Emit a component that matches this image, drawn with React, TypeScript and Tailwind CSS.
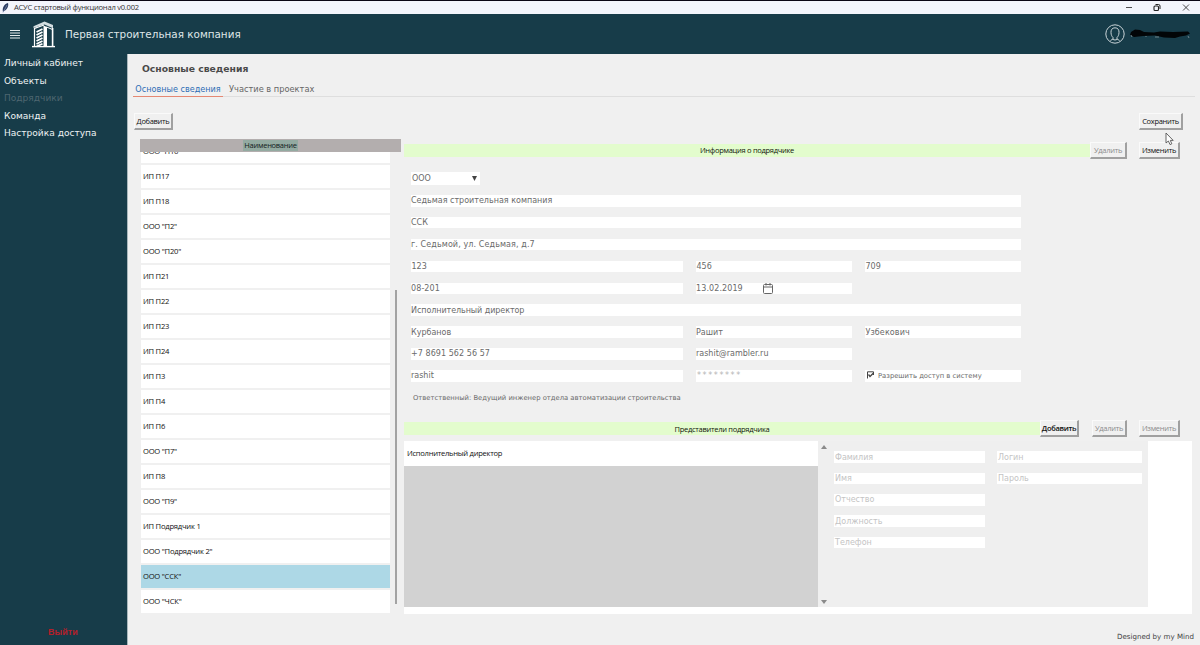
import { ReactNode } from "react";
import { clsx } from "clsx";

const menu = [
  { label: "Личный кабинет" },
  { label: "Объекты" },
  { label: "Подрядчики", disabled: true },
  { label: "Команда" },
  { label: "Настройка доступа" },
];

const contractors = [
  'ООО "П16"',
  "ИП П17",
  "ИП П18",
  'ООО "П2"',
  'ООО "П20"',
  "ИП П21",
  "ИП П22",
  "ИП П23",
  "ИП П24",
  "ИП П3",
  "ИП П4",
  "ИП П6",
  'ООО "П7"',
  "ИП П8",
  'ООО "П9"',
  "ИП Подрядчик 1",
  'ООО "Подрядчик 2"',
  'ООО "ССК"',
  'ООО "ЧСК"',
];

function Button({
  children,
  disabled,
  className,
}: {
  children: ReactNode;
  disabled?: boolean;
  className?: string;
}) {
  return (
    <button
      disabled={disabled}
      className={clsx(
        "flex h-[17px] shrink-0 items-center justify-center whitespace-nowrap border border-b-2 border-r-2 border-t-[#fafafa] border-l-[#fafafa] border-b-[#a0a0a0] border-r-[#a0a0a0] bg-[#f0f0f0] pt-px font-['Open_Sans',sans-serif] text-[7.5px] leading-none tracking-[-0.3px]",
        disabled ? "text-[#8c8c8c]" : "text-[#111]",
        className
      )}
    >
      {children}
    </button>
  );
}

function Banner({ children }: { children: ReactNode }) {
  return (
    <div className="flex h-[13px] flex-1 items-center justify-center bg-[#e3fccd] pt-px font-['Open_Sans',sans-serif] text-[7.5px] font-medium leading-none tracking-[-0.28px] text-[#10160a]">
      {children}
    </div>
  );
}

function Field({
  children,
  className,
}: {
  children?: ReactNode;
  className?: string;
}) {
  return (
    <div
      className={clsx(
        "flex h-[11.5px] shrink-0 items-center whitespace-nowrap bg-white pt-px leading-none",
        className
      )}
    >
      {children}
    </div>
  );
}

function Row({ children }: { children: ReactNode }) {
  return <div className="flex h-[21.9px] items-start gap-[13px]">{children}</div>;
}

export default function App() {
  return (
    <div className="flex h-[645px] w-[1200px] flex-col overflow-hidden bg-[#f0f0f0] font-['DejaVu_Sans',sans-serif] text-[8px]">
      {/* Window title */}
      <div className="flex h-[14px] shrink-0 items-center border-t border-[#0a0614] bg-[#f3f5fc]">
        <svg className="ml-[1px] h-[11px] w-[9px]" viewBox="0 0 9 11">
          <path d="M2 10 C1 6 3 2 7 1 C8 4 6 8 3 9 Z" fill="#2b3b60" />
          <path d="M2 10.5 L6 3" stroke="#8495b8" strokeWidth="0.7" />
        </svg>
        <span className="ml-[4px] whitespace-nowrap font-['Open_Sans',sans-serif] text-[7.6px] leading-none tracking-[-0.25px] text-[#333]">
          АСУС стартовый функционал v0.002
        </span>
        <svg
          className="ml-auto mr-[9px] h-[9px] w-[66px]"
          viewBox="0 0 66 9"
          fill="none"
          stroke="#222"
        >
          <path d="M1 4.5 H7" strokeWidth="0.8" />
          <rect x="29" y="3" width="4.5" height="4.5" rx="1" strokeWidth="1.1" />
          <path d="M30.5 1.5 H33.5 Q35 1.5 35 3 V6" strokeWidth="1" />
          <path d="M58 1.5 L64 7.5 M64 1.5 L58 7.5" strokeWidth="0.8" />
        </svg>
      </div>

      {/* Header */}
      <header className="flex h-[40px] shrink-0 items-center bg-[#173c49] text-[#dfe6e8]">
        <svg
          className="ml-[10px] h-[10px] w-[10px]"
          viewBox="0 0 10 10"
          stroke="#e4eaec"
          strokeWidth="1.2"
        >
          <path d="M0 1.5 H10 M0 4 H10 M0 6.5 H10 M0 9 H10" />
        </svg>
        <svg className="ml-[11px] h-[27px] w-[25px]" viewBox="0 0 25 27" fill="none">
          <path d="M1 25.6 H24" stroke="#fff" strokeWidth="1.4" />
          <path d="M3.5 25 V7.5 L13 4" stroke="#fff" strokeWidth="1.2" />
          <path d="M2.5 5.2 L13.5 0.6 L22 4 V7.3 L13.5 3.4 L2.5 7 Z" fill="#d3dee1" />
          <path
            d="M5.5 11 L11.5 8 M5.5 14 L11.5 11 M5.5 17 L11.5 14 M5.5 20 L11.5 17 M5.5 23 L11.5 20 M5.5 25.5 L11.5 22.8"
            stroke="#fff"
            strokeWidth="1.8"
          />
          <path d="M12.5 4.5 L16 6 V25.5 H12.5 Z M20.8 7 H22.4 V25.5 H20.8 Z" fill="#fff" />
          <path d="M15.5 6 L21.5 8.5" stroke="#fff" strokeWidth="1" />
        </svg>
        <span className="ml-[9px] whitespace-nowrap text-[10.4px] leading-none">
          Первая строительная компания
        </span>
        <svg
          className="ml-auto h-[20px] w-[20px]"
          viewBox="0 0 20 20"
          fill="none"
          stroke="#c9d3d7"
          strokeWidth="1"
        >
          <circle cx="10" cy="10" r="9.2" />
          <path d="M10 3.8 C7 3.8 5.8 6 6 8.7 C6.1 11 7 12.6 8 13.5 V15 L5.5 16.5 M10 3.8 C13 3.8 14.2 6 14 8.7 C13.9 11 13 12.6 12 13.5 V15 L14.5 16.5" />
          <path d="M8 15.5 Q10 16.5 12 15.5" />
        </svg>
        <svg className="ml-[3px] mr-[6px] h-[12px] w-[66px]" viewBox="0 0 66 12">
          <path
            d="M3 4 L7 1.5 L12 2 L16 4 L26 4.5 L32 3.5 L45 4 L60 3.5 L62 5.5 L58 7.5 L52 8.5 L47 10 L36 9.5 L27 7.5 L15 8 L6 9 L2 7 Z"
            fill="#020507"
          />
          <path d="M3 7 L4 9 M18 8 V9 M27 9 H31 M60 8 L61 10" stroke="#87979d" strokeWidth="0.8" />
        </svg>
      </header>

      <div className="flex min-h-0 flex-1">
        <aside className="flex w-[128px] shrink-0 flex-col border-r border-[#a9b7bc] bg-[#173c49] pl-[4px]">
          <nav className="mt-[1px] flex flex-col">
            {menu.map((m) => (
              <a
                key={m.label}
                className={clsx(
                  "flex h-[17.5px] items-center whitespace-nowrap text-[9.05px] leading-none",
                  m.disabled ? "text-[#4e6670]" : "text-[#eef2f3]"
                )}
              >
                {m.label}
              </a>
            ))}
          </nav>
          <button className="mb-[7px] ml-[44px] mt-auto self-start font-['Liberation_Sans',sans-serif] text-[9px] font-bold leading-[11px] text-[#b3202b]">
            Выйти
          </button>
        </aside>

        <main className="flex min-w-0 flex-1 flex-col">
          <h1 className="ml-[14px] mt-[9px] h-[12px] whitespace-nowrap text-[9.25px] font-bold leading-[12px] text-[#4a4a4a]">
            Основные сведения
          </h1>
          <div className="ml-[5px] mr-[5px] mt-[7px] flex h-[15px] items-end border-b border-[#dedede] leading-none">
            <div className="-mb-px flex h-[15px] w-[90px] items-center justify-center whitespace-nowrap border-b border-[#e58873] text-[8.1px] text-[#2d6db5]">
              Основные сведения
            </div>
            <div className="-mb-px ml-[6px] flex h-[15px] items-center whitespace-nowrap text-[8.25px] text-[#666]">
              Участие в проектах
            </div>
          </div>

          <div className="mt-[16px] flex h-[17px] justify-between pl-[6px] pr-[17px]">
            <Button className="w-[39px]">Добавить</Button>
            <Button className="w-[44px]">Сохранить</Button>
          </div>

          <div className="flex flex-1">
            {/* Contractors list */}
            <section className="ml-[12px] mt-[9px] w-[261px]">
              <div className="flex h-[13px] items-center justify-center bg-[#b3aeae] font-['Open_Sans',sans-serif] text-[7.5px] font-medium leading-none tracking-[-0.28px] text-[#14211d]">
                <span className="bg-[#93aaa1] px-px pb-px pt-[2px]">Наименование</span>
              </div>
              <div className="flex h-[461.4px]">
                <div className="flex w-[250px] flex-col justify-end overflow-hidden pl-px">
                  {contractors.map((c) => (
                    <div key={c} className="h-[25.04px] shrink-0 pt-[2px]">
                      <div
                        className={clsx(
                          "flex h-[23px] items-center whitespace-nowrap pl-[2px] font-['Open_Sans',sans-serif] text-[7.6px] leading-none tracking-[-0.22px] text-[#111]",
                          c === 'ООО "ССК"' ? "bg-[#add8e6]" : "bg-white"
                        )}
                      >
                        {c}
                      </div>
                    </div>
                  ))}
                </div>
                <div className="ml-[5px] mt-[138px] h-[314px] w-[2px] bg-[#a3a3a3]" />
              </div>
            </section>

            <section className="ml-[3px] mt-[12px] w-[788px]">
              <div className="flex h-[17px] items-center">
                <Banner>Информация о подрядчике</Banner>
                <Button disabled className="w-[37px]">
                  Удалить
                </Button>
                <Button className="ml-[12px] mr-[12px] w-[41px]">Изменить</Button>
              </div>

              <div className="pl-[7px] pt-[13px] text-[#6a6a6a]">
                <div className="flex h-[12.5px] w-[69px] items-center justify-between bg-white pl-px pr-[3px] pt-[2px] leading-none">
                  <span>ООО</span>
                  <svg className="-mt-px h-[5px] w-[5px]" viewBox="0 0 5 5" fill="#444">
                    <path d="M0 0 H5 L2.5 5 Z" />
                  </svg>
                </div>
                <div className="mt-[10.5px]">
                  <Row>
                    <Field className="w-[610px]">Седьмая строительная компания</Field>
                  </Row>
                  <Row>
                    <Field className="w-[610px]">ССК</Field>
                  </Row>
                  <Row>
                    <Field className="w-[610px] tracking-[0.1px]">г. Седьмой, ул. Седьмая, д.7</Field>
                  </Row>
                  <Row>
                    <Field className="w-[272px] pl-[0.5px]">123</Field>
                    <Field className="w-[156px] pl-[0.5px]">456</Field>
                    <Field className="w-[156px] pl-[0.5px]">709</Field>
                  </Row>
                  <Row>
                    <Field className="w-[272px] tracking-[0.1px]">08-201</Field>
                    <Field className="w-[156px]">
                      <span className="w-[67px] tracking-[0.1px]">13.02.2019</span>
                      <svg
                        className="-mt-px h-[11px] w-[10px]"
                        viewBox="0 0 10 11"
                        fill="none"
                        stroke="#666"
                        strokeWidth="1"
                      >
                        <rect x="0.5" y="1.5" width="9" height="9" rx="1" />
                        <path d="M0.5 4 H9.5 M3 0 V2.5 M7 0 V2.5" />
                      </svg>
                    </Field>
                  </Row>
                  <Row>
                    <Field className="w-[610px] tracking-[-0.07px]">Исполнительный директор</Field>
                  </Row>
                  <Row>
                    <Field className="w-[272px]">Курбанов</Field>
                    <Field className="w-[156px]">Рашит</Field>
                    <Field className="w-[156px] pl-[0.5px] tracking-[0.1px]">Узбекович</Field>
                  </Row>
                  <Row>
                    <Field className="w-[272px] tracking-[0.06px]">+7 8691 562 56 57</Field>
                    <Field className="w-[156px]">rashit@rambler.ru</Field>
                  </Row>
                  <Row>
                    <Field className="w-[272px]">rashit</Field>
                    <Field className="w-[156px] pl-px tracking-[1.6px] text-[#b5b5b5]">********</Field>
                    <Field className="w-[156px] pl-[2px]">
                      <svg
                        className="-mt-[2px] mr-[4px] h-[8px] w-[7px]"
                        viewBox="0 0 7 8"
                        fill="none"
                        stroke="#444"
                        strokeWidth="1"
                      >
                        <path d="M0.5 7.5 V0.8 H6.5 V4" />
                        <path d="M1.5 3.5 L3 5.5 L6.5 2" strokeWidth="1.3" />
                      </svg>
                      <span className="text-[6.8px]">Разрешить доступ в систему</span>
                    </Field>
                  </Row>
                </div>
                <p className="ml-[2px] h-[10px] whitespace-nowrap pt-px text-[6.8px] leading-[10px]">
                  Ответственный: Ведущий инженер отдела автоматизации строительства
                </p>
              </div>

              <div className="mt-[18.4px] flex h-[17px] items-center">
                <Banner>Представители подрядчика</Banner>
                <Button className="w-[39px] font-semibold">Добавить</Button>
                <Button disabled className="ml-[13px] w-[35px]">
                  Удалить
                </Button>
                <Button disabled className="ml-[12px] mr-[12px] w-[41px]">
                  Изменить
                </Button>
              </div>

              {/* Representatives */}
              <div className="mt-[4px] flex h-[173px] items-start bg-white">
                <div className="w-[414px]">
                  <div className="flex h-[25px] items-center pl-[3px] font-['Open_Sans',sans-serif] text-[7.6px] leading-none tracking-[-0.28px] text-[#111]">
                    Исполнительный директор
                  </div>
                  <div className="h-[141px] bg-[#d2d2d2]" />
                </div>
                <div className="flex h-[166px] w-[330px] bg-[#efefef] pl-[3px] text-[#c4c4c4]">
                  <div className="flex w-[6px] flex-col justify-between pb-[3px] pt-[4px]">
                    <svg className="h-[4px] w-[6px]" viewBox="0 0 6 4" fill="#8a8a8a">
                      <path d="M0 4 H6 L3 0 Z" />
                    </svg>
                    <svg className="h-[4px] w-[6px]" viewBox="0 0 6 4" fill="#8a8a8a">
                      <path d="M0 0 H6 L3 4 Z" />
                    </svg>
                  </div>
                  <div className="ml-[7px] flex flex-col gap-[9.8px] pt-[10px]">
                    {["Фамилия", "Имя", "Отчество", "Должность", "Телефон"].map((f) => (
                      <Field key={f} className="w-[151px] pl-px">
                        {f}
                      </Field>
                    ))}
                  </div>
                  <div className="ml-[12px] flex flex-col gap-[9.8px] pt-[10px]">
                    {["Логин", "Пароль"].map((f) => (
                      <Field key={f} className="w-[145px] pl-px">
                        {f}
                      </Field>
                    ))}
                  </div>
                </div>
              </div>
            </section>
          </div>

          <footer className="flex h-[31px] shrink-0 items-center justify-end pr-[6px] pt-[13px] text-[7.1px] leading-none text-[#444]">
            Designed by my Mind
          </footer>
        </main>
      </div>

      {/* Mouse pointer */}
      <svg className="absolute left-[1165px] top-[132px] h-[14px] w-[9px]" viewBox="0 0 9 14">
        <path
          d="M1 1 V11 L3.4 9 L5 12.6 L6.8 11.8 L5.3 8.4 H8.2 Z"
          fill="#fff"
          stroke="#555"
          strokeWidth="0.9"
        />
      </svg>
    </div>
  );
}
